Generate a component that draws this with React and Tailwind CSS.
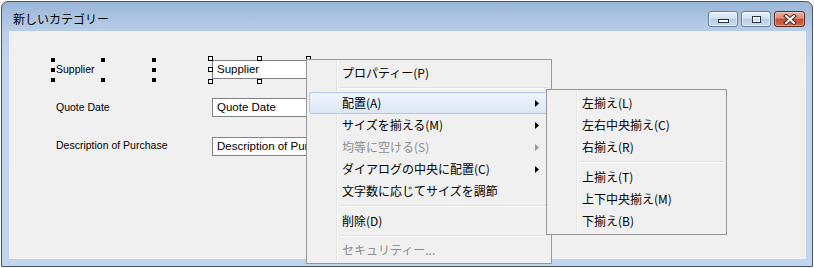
import React from "react";

const JP = "font-['Noto_Sans_CJK_JP',sans-serif]";
const LAT = "font-['Liberation_Sans','Noto_Sans_CJK_JP',sans-serif]";

function Arrow({ disabled }) {
  return (
    <svg width="4" height="7" viewBox="0 0 4 7" className="block">
      <polygon points="0,0 4,3.5 0,7" fill={disabled ? "#9a9a9a" : "#000"} />
    </svg>
  );
}

function Item({ label, arrow, disabled, hot }) {
  return (
    <div
      className={
        "relative h-[22px] flex items-center justify-between pl-[32px] pr-[9px] rounded-[3px] border " +
        (hot
          ? "border-[#aecbef] bg-[linear-gradient(to_bottom,#f0f5fd,#dbe7f8)]"
          : "border-transparent")
      }
    >
      <span
        className={
          "text-[12px] leading-none whitespace-nowrap " +
          (disabled ? "text-[#8d8d8d]" : "text-black")
        }
      >
        {label}
      </span>
      {arrow ? <Arrow disabled={disabled} /> : null}
    </div>
  );
}

function Sep({ h = "h-[8px]" }) {
  return (
    <div className={h + " flex flex-col justify-center pl-[31px] pr-[1px]"}>
      <div className="h-px bg-[#e0e0e0]" />
      <div className="h-px bg-white" />
    </div>
  );
}

function Menu({ className, children, gutter = "left-[29px]" }) {
  return (
    <div
      className={
        "absolute border border-[#979797] bg-[#f0f0f0] p-[2px] " + JP + " " + className
      }
    >
      <div className={"absolute top-[2px] bottom-[2px] w-[2px] flex " + gutter}>
        <div className="w-px bg-[#e2e3e3]" />
        <div className="w-px bg-white" />
      </div>
      <div className="relative flex flex-col">{children}</div>
    </div>
  );
}

function Solid({ className }) {
  return <div className={"absolute w-[4px] h-[4px] bg-black " + className} />;
}
function Hollow({ className }) {
  return (
    <div
      className={
        "absolute w-[5px] h-[5px] bg-white border border-black " + className
      }
    />
  );
}

function TextBox({ children }) {
  return (
    <div
      className={
        "w-[130px] h-[19px] bg-white border border-[#828282] flex items-center pl-[4px] text-[11.5px] leading-none text-black whitespace-nowrap overflow-hidden " +
        LAT
      }
    >
      {children}
    </div>
  );
}

function Label({ children, className = "" }) {
  return (
    <div
      className={
        "w-[156px] text-[10.5px] leading-none text-black whitespace-nowrap " +
        LAT +
        " " +
        className
      }
    >
      {children}
    </div>
  );
}

export default function App() {
  return (
    <div className="relative w-[814px] h-[268px] bg-white overflow-hidden">
      <div className="ml-[1px] mt-[1px] w-[812px] h-[266px] rounded-t-[7px] border border-[#4a5462] bg-[linear-gradient(to_bottom,#9ab6d7_0px,#b9cfe9_30px,#c0d6ee_60px,#bfd5ee_100%)] flex flex-col">
        {/* title bar */}
        <div className="h-[29px] flex items-start justify-between">
          <div className={"pl-[11px] pt-[11px] text-[12px] leading-none text-black " + JP}>
            新しいカテゴリー
          </div>
          <div className="flex gap-[3px] mt-[9px] mr-[7px]">
            <div className="w-[30px] h-[16px] rounded-[3px] border border-[#6b7e98] bg-[linear-gradient(to_bottom,#e8eff9_0%,#d4e1f2_45%,#b8cce6_50%,#c9dbef_100%)] shadow-[inset_0_0_0_1px_rgba(255,255,255,0.55)] flex items-center justify-center">
              <div className="w-[11px] h-[4px] mt-[4px] border border-[#27303a] bg-white" />
            </div>
            <div className="w-[30px] h-[16px] rounded-[3px] border border-[#6b7e98] bg-[linear-gradient(to_bottom,#e8eff9_0%,#d4e1f2_45%,#b8cce6_50%,#c9dbef_100%)] shadow-[inset_0_0_0_1px_rgba(255,255,255,0.55)] flex items-center justify-center">
              <div className="w-[9px] h-[7px] border border-[#27303a] bg-[#cfdcec] shadow-[inset_0_0_0_1px_#ffffff]" />
            </div>
            <div className="w-[31px] h-[16px] rounded-[3px] border border-[#5e2a24] bg-[linear-gradient(to_bottom,#eab1a2_0%,#db8a76_45%,#c64a31_50%,#cf6a4e_100%)] shadow-[inset_0_0_0_1px_rgba(255,255,255,0.35)] flex items-center justify-center">
              <svg width="14" height="11" viewBox="0 0 14 11">
                <path d="M3 2 L11 9 M11 2 L3 9" stroke="#4a2a26" strokeWidth="4" strokeLinecap="square" />
                <path d="M3 2 L11 9 M11 2 L3 9" stroke="#ffffff" strokeWidth="2" strokeLinecap="square" />
              </svg>
            </div>
          </div>
        </div>
        {/* body */}
        <div className="flex-1 flex pl-[7px] pr-[6px] pb-[7px]">
          <div className="flex-1 bg-[#f0f0f0] flex flex-col pt-[29px]">
            <div className="relative flex items-center pl-[47px]">
              <Label>Supplier</Label>
              <TextBox>Supplier</TextBox>
              <Solid className="left-[42px] top-[-2px]" />
              <Solid className="left-[42px] top-[8px]" />
              <Solid className="left-[42px] top-[18px]" />
              <Solid className="left-[92px] top-[-2px]" />
              <Solid className="left-[92px] top-[18px]" />
              <Solid className="left-[143px] top-[-2px]" />
              <Solid className="left-[143px] top-[8px]" />
              <Solid className="left-[143px] top-[18px]" />
              <Hollow className="left-[199px] top-[-4px]" />
              <Hollow className="left-[199px] top-[7px]" />
              <Hollow className="left-[199px] top-[19px]" />
              <Hollow className="left-[248px] top-[-4px]" />
              <Hollow className="left-[248px] top-[19px]" />
              <Hollow className="left-[297px] top-[-4px]" />
            </div>
            <div className="flex items-center pl-[47px] mt-[19px]">
              <Label>Quote Date</Label>
              <TextBox>Quote Date</TextBox>
            </div>
            <div className="flex items-center pl-[47px] mt-[20px]">
              <Label className="mb-[3px]">Description of Purchase</Label>
              <TextBox>Description of Purchase</TextBox>
            </div>
          </div>
        </div>
      </div>

      {/* context menu */}
      <Menu className="left-[306px] top-[59px] w-[246px]">
        <Item label="プロパティー(P)" />
        <Sep />
        <Item label="配置(A)" arrow hot />
        <Item label="サイズを揃える(M)" arrow />
        <Item label="均等に空ける(S)" arrow disabled />
        <Item label="ダイアログの中央に配置(C)" arrow />
        <Item label="文字数に応じてサイズを調節" />
        <Sep />
        <Item label="削除(D)" />
        <Sep h="h-[7px]" />
        <Item label="セキュリティー..." disabled />
      </Menu>

      {/* submenu */}
      <Menu className="left-[546px] top-[89px] w-[181px]">
        <Item label="左揃え(L)" />
        <Item label="左右中央揃え(C)" />
        <Item label="右揃え(R)" />
        <Sep />
        <Item label="上揃え(T)" />
        <Item label="上下中央揃え(M)" />
        <Item label="下揃え(B)" />
      </Menu>
    </div>
  );
}
